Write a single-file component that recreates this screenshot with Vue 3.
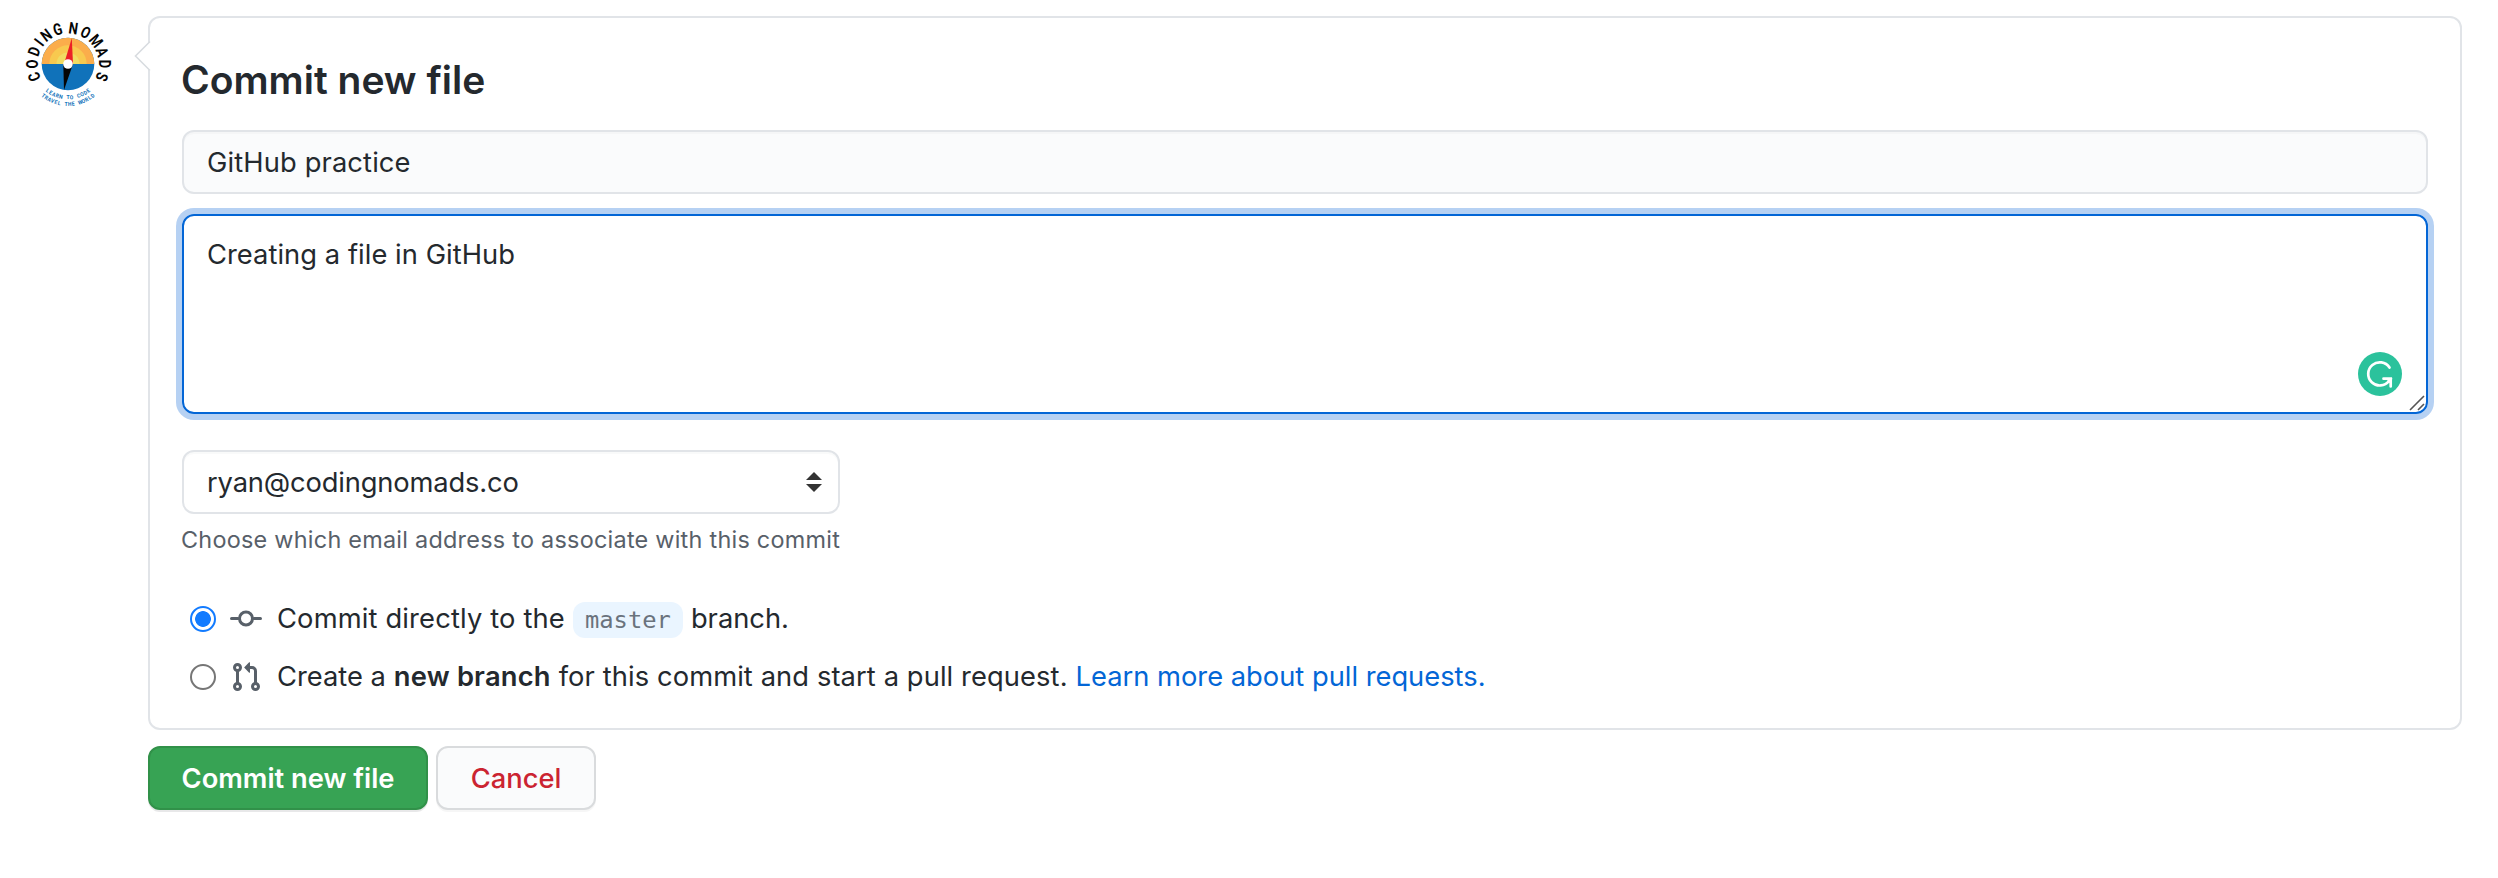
<script setup>
import { ref } from 'vue'
const summary = ref('GitHub practice')
const description = ref('Creating a file in GitHub')

// Logo lettering: each letter sits at its own angle around the compass.
const ringAngles = [-110.5, -90, -69.5, -53, -37, -16.5, 8.4, 29, 50.5, 70.5, 90, 110.5]
const ring = [...'CODINGNOMADS'].map((ch, i) => ({ ch, angle: ringAngles[i] }))
const spread = (text, half) =>
  [...text]
    .map((ch, i) => ({ ch, angle: half - (i * 2 * half) / (text.length - 1) }))
    .filter((l) => l.ch !== ' ')
const mottoIn = spread('LEARN TO CODE', 37.3)
const mottoOut = spread('TRAVEL THE WORLD', 37.8)
</script>

<template>
  <main class="page">
    <svg class="avatar" viewBox="20 16 96 96" aria-label="Coding Nomads">
      <defs>
        <clipPath id="sky"><rect x="40" y="30" width="56" height="34" /></clipPath>
      </defs>
      <circle cx="68" cy="64" r="26.3" fill="#1072ba" />
      <g clip-path="url(#sky)">
        <circle cx="68" cy="64" r="26.3" fill="#fbad4b" />
        <circle cx="68" cy="64" r="18.7" fill="#f8c94f" />
        <circle cx="68" cy="64" r="11.5" fill="#f1dc62" />
      </g>
      <path d="M71.8 38 73 64H64Z" fill="#ec2027" />
      <path d="M64 90 63.3 64H73Z" fill="#050505" />
      <circle cx="68" cy="64" r="4.8" fill="#fff" />
      <text v-for="l in ring" :key="l.angle" class="ring" :transform="`translate(68 64) rotate(${l.angle}) translate(0 -30.5) scale(.8 1)`">{{ l.ch }}</text>
      <text v-for="l in mottoIn" :key="'i' + l.angle" class="motto" :transform="`translate(68 64) rotate(${l.angle}) translate(0 35.4) scale(.9 1)`">{{ l.ch }}</text>
      <text v-for="l in mottoOut" :key="'o' + l.angle" class="motto" :transform="`translate(68 64) rotate(${l.angle}) translate(0 42) scale(.9 1)`">{{ l.ch }}</text>
    </svg>

    <form class="form" @submit.prevent>
      <section class="card">
        <svg class="caret" viewBox="0 0 18 32"><path d="M17 0V32L1.5 16Z" fill="#fff" /><path d="M16 1.5 1.5 16 16 30.5" fill="none" stroke="#d8dce0" stroke-width="1.6" /></svg>
        <h1>Commit new file</h1>
        <div class="field summary">{{ summary }}</div>
        <div class="field description">
          <span>{{ description }}</span>
          <svg class="helper" viewBox="0 0 44 44">
            <circle cx="22" cy="22" r="22" fill="#2bc29c" />
            <path d="M31.5 15.5A11.6 11.6 0 1 0 31 29L33 26.8M25.5 26.7H32.7V34.5" fill="none" stroke="#fff" stroke-width="2.7" stroke-linecap="round" />
            <path d="M27 26H34V33Z" fill="#fff" />
          </svg>
          <svg class="grip" viewBox="0 0 16 16"><path d="M1 15 15 1M9 15 15 9" stroke="#555" stroke-width="1.6" /></svg>
        </div>
        <div class="field select">
          <span class="mail">ryan@codingnomads.co</span>
          <svg class="arrows" viewBox="0 0 16 20"><path d="M0 8 8 0 16 8ZM0 12H16L8 20Z" fill="#333" /></svg>
        </div>
        <p class="hint">Choose which email address to associate with this commit</p>
        <div class="option">
          <span class="radio on"></span>
          <svg class="icon" viewBox="0 0 16 16"><path d="M.75 7.75H4M12 7.75H15.25" stroke="#586069" stroke-width="1.5" stroke-linecap="round" /><circle cx="8" cy="7.75" r="3.25" fill="none" stroke="#586069" stroke-width="1.5" /></svg>
          <span class="direct">Commit directly to the</span>
          <code>master</code>
          <span class="branch">branch.</span>
        </div>
        <div class="option second">
          <span class="radio"></span>
          <svg class="icon" viewBox="0 0 16 16"><g fill="none" stroke="#586069" stroke-width="1.5"><circle cx="3.75" cy="3.25" r="1.5" /><circle cx="3.75" cy="12.75" r="1.5" /><circle cx="12.75" cy="12.75" r="1.5" /><path d="M3.75 4.75V11.25M12.75 11.25V5A1.75 1.75 0 0 0 11 3.25H9" /></g><path d="M9.573.677A.25.25 0 0 1 10 .854V5.646A.25.25 0 0 1 9.573 5.823L7.177 3.427A.25.25 0 0 1 7.177 3.073Z" fill="#586069" /></svg>
          <span>Create a</span>
          <b>new branch</b>
          <span class="pull">for this commit and start a pull request.</span>
          <a>Learn more about pull requests.</a>
        </div>
      </section>
      <div class="actions">
        <button class="primary">Commit new file</button>
        <button class="cancel">Cancel</button>
      </div>
    </form>
  </main>
</template>

<style>
body { margin: 0; background: #fff; }
</style>

<style scoped>
* { box-sizing: border-box; }
.page { display: flex; width: 2498px; height: 878px; padding: 16px 36px 0 20px; font-family: Inter, "Liberation Sans", sans-serif; font-size: 27.3px; line-height: 40px; color: #24292e; white-space: nowrap; }
.avatar { flex: none; width: 96px; height: 96px; margin-right: 32px; }
.ring { font: 700 16.2px Roboto, sans-serif; fill: #050505; text-anchor: middle; }
.motto { font: 700 5.6px Roboto, sans-serif; fill: #1072ba; text-anchor: middle; }
.form { flex: 1; }
.card { position: relative; height: 714px; border: 2px solid #e1e4e8; border-radius: 12px; padding: 32px 32px 0; }
.caret { position: absolute; left: -16px; top: 22px; width: 18px; height: 32px; }
h1 { margin: 0 0 20px -1px; height: 60px; line-height: 60px; font-size: 39px; font-weight: 600; }
.field { border: 2px solid #e1e4e8; border-radius: 12px; }
.summary { height: 64px; padding: 11px 23px 9px; background: #fafbfc; box-shadow: inset 0 2px 0 rgba(225, 228, 232, .2); letter-spacing: .13px; }
.description { position: relative; height: 200px; margin-top: 20px; padding: 19px 23px; border-color: #0366d6; box-shadow: 0 0 0 6px #b6d1f3; letter-spacing: .05px; }
.helper { position: absolute; right: 24px; bottom: 16px; width: 44px; height: 44px; }
.grip { position: absolute; right: 1px; bottom: 1px; width: 16px; height: 16px; }
.select { display: flex; align-items: center; justify-content: space-between; width: 658px; height: 64px; margin-top: 36px; padding: 0 16px 0 23px; box-shadow: inset 0 2px 0 rgba(225, 228, 232, .2); }
.mail { padding-top: 1px; letter-spacing: -.14px; }
.arrows { width: 16px; height: 20px; }
.hint { margin: 8px 0 0 -1px; height: 36px; line-height: 36px; font-size: 23.4px; letter-spacing: .26px; color: #586069; }
.option { display: flex; align-items: center; height: 40px; margin-top: 41px; padding-left: 8px; }
.second { margin-top: 18px; }
.radio { width: 26px; height: 26px; margin-right: 14px; border: 2px solid #767676; border-radius: 50%; }
.radio.on { border-color: #127bff; background: radial-gradient(circle, #127bff 7.5px, #fff 8.2px); }
.icon { width: 32px; height: 32px; margin-right: 15px; }
.direct { letter-spacing: .16px; }
code { height: 36px; margin: 2px 8px 0; padding: 0 12px; border-radius: 12px; background: #eaf5ff; font: 23.8px/36px "DejaVu Sans Mono", monospace; color: #6a737d; }
b { font-weight: 600; margin: 0 8px; letter-spacing: .2px; }
.pull { letter-spacing: .1px; }
a { color: #0366d6; margin-left: 8px; }
.actions { display: flex; gap: 8px; margin-top: 16px; }
button { height: 64px; padding: 1px 0 0; border: 2px solid #d9dbdd; border-radius: 12px; font: 500 27.3px/40px Inter, sans-serif; }
.primary { width: 280px; border-color: #319149; background: #37a354; color: #fff; box-shadow: 0 2px 0 rgba(27, 31, 35, .1); font-weight: 600; }
.cancel { width: 160px; background: #fafbfc; color: #cb2431; box-shadow: 0 2px 0 rgba(27, 31, 35, .04); }
</style>
